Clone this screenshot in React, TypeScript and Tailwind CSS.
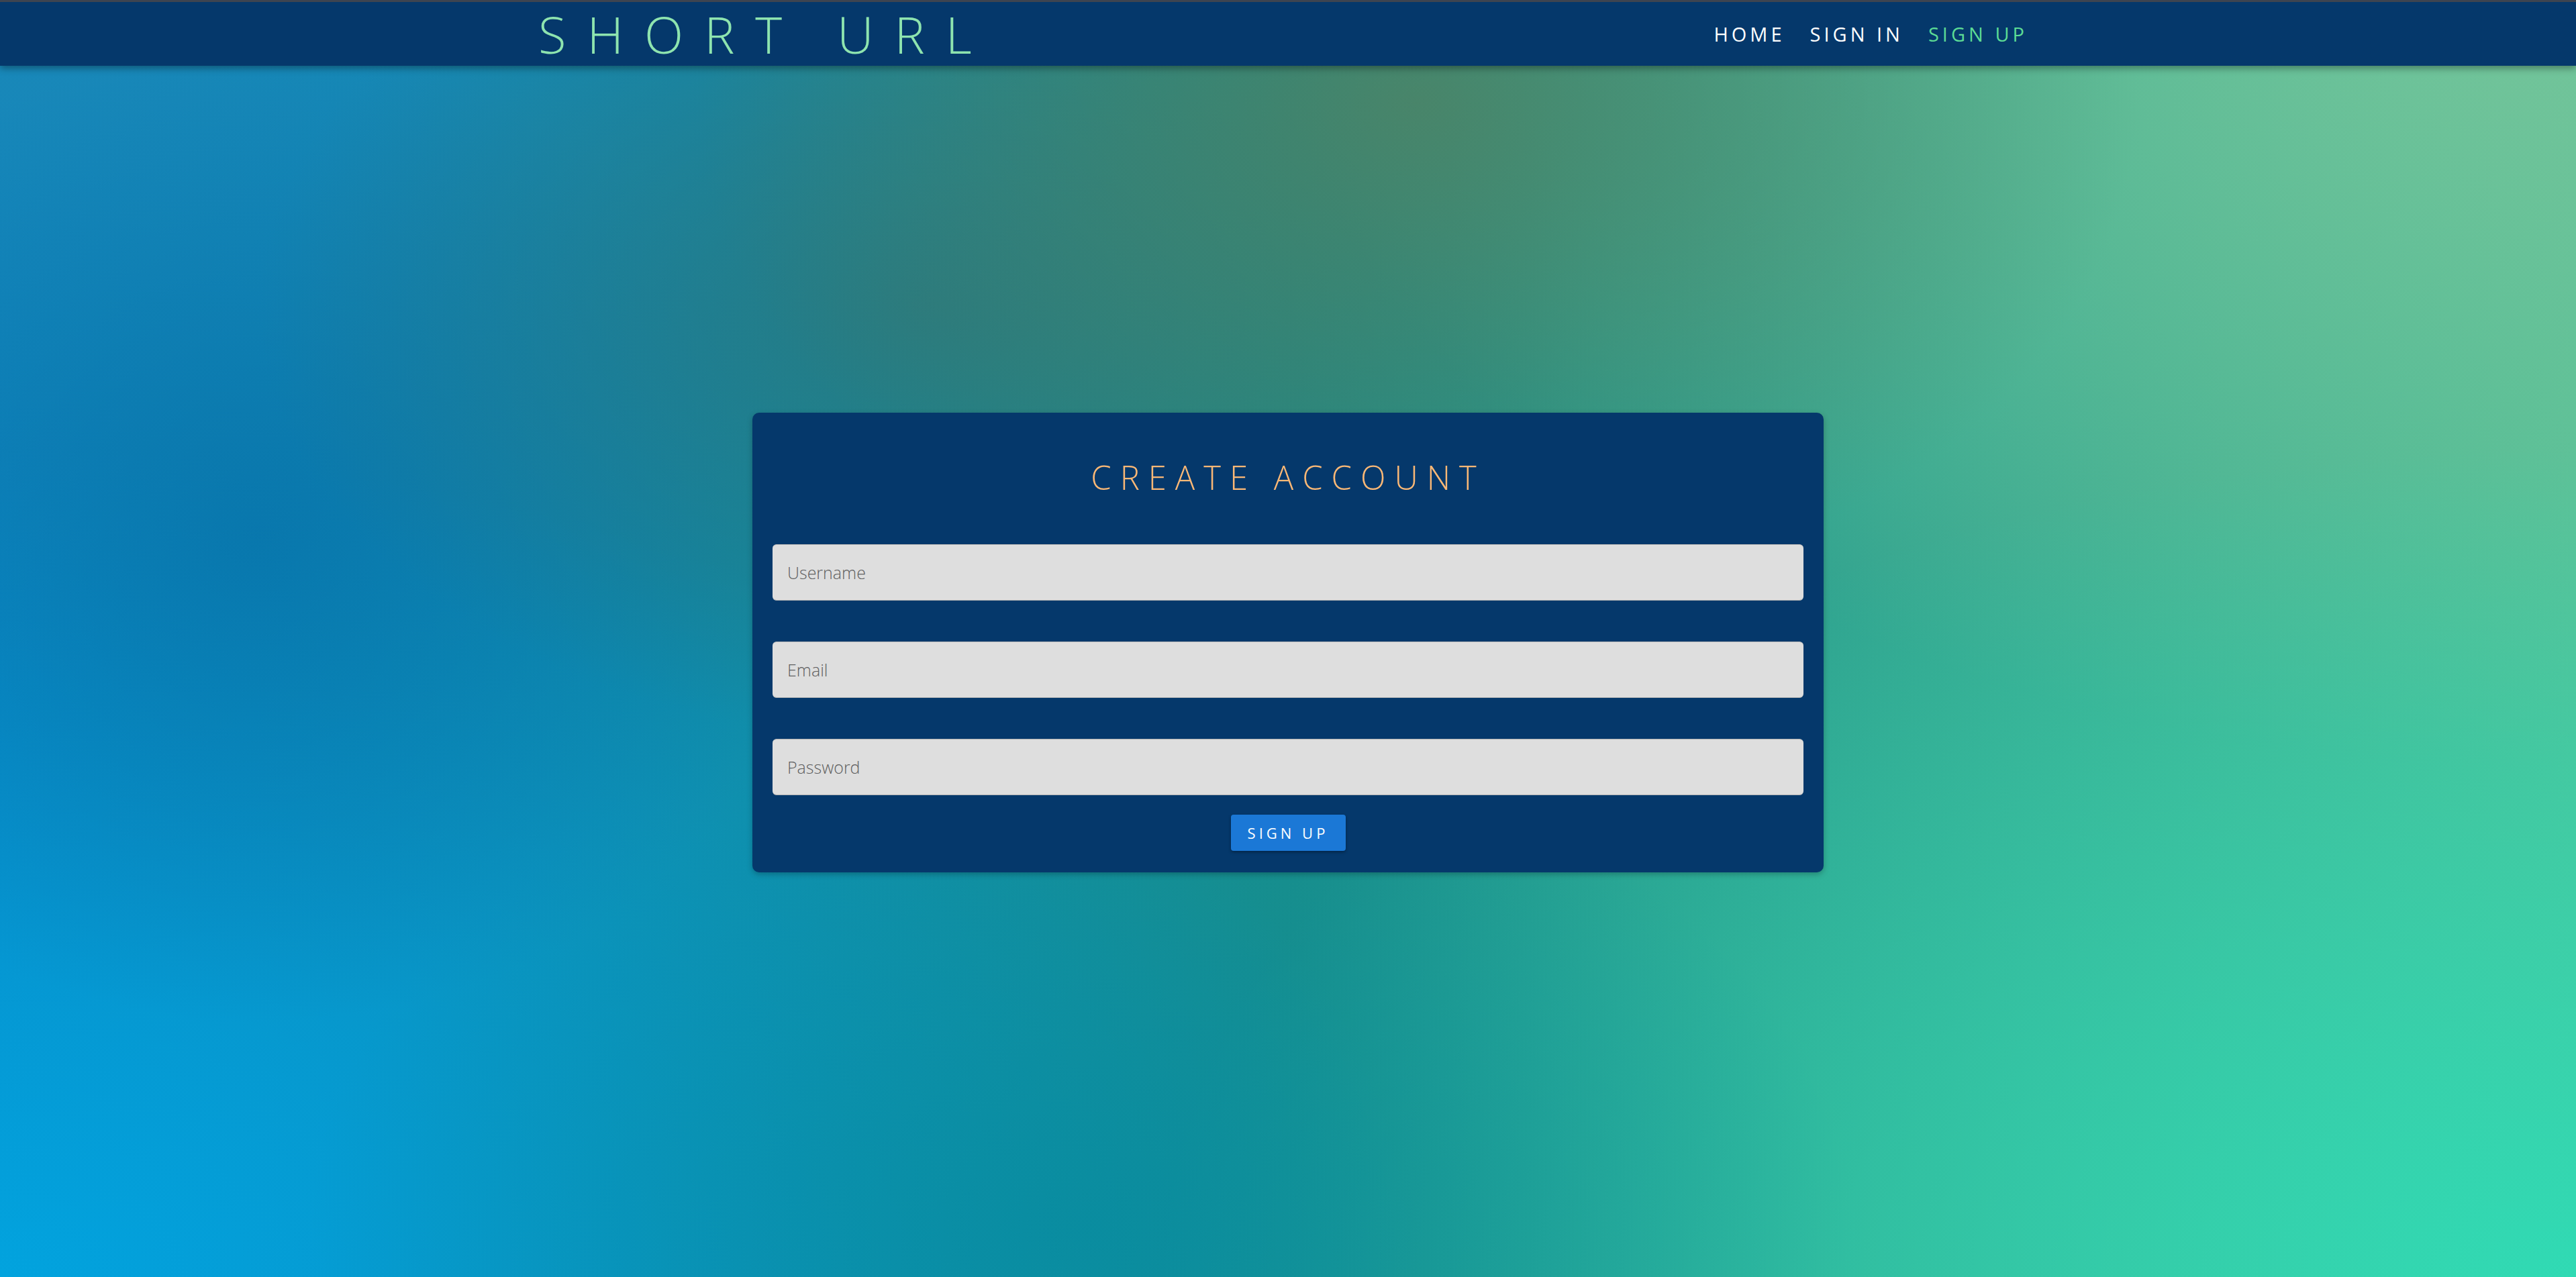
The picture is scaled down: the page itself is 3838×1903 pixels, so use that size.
import { useState } from "react";

const navLinks = [
  { label: "HOME", active: false },
  { label: "SIGN IN", active: false },
  { label: "SIGN UP", active: true },
];

const fields = [
  { name: "username", type: "text", placeholder: "Username" },
  { name: "email", type: "email", placeholder: "Email" },
  { name: "password", type: "password", placeholder: "Password" },
];

export default function App() {
  const [values, setValues] = useState<Record<string, string>>({});

  return (
    <div
      className="min-h-screen w-full font-['Open_Sans','Liberation_Sans',sans-serif] [background-image:radial-gradient(ellipse_28%_40%_at_55%_8%,rgba(78,130,100,0.85),transparent),radial-gradient(ellipse_26%_34%_at_36%_24%,rgba(44,116,120,0.75),transparent),radial-gradient(ellipse_22%_38%_at_10%_42%,rgba(6,112,168,0.7),transparent),radial-gradient(ellipse_30%_40%_at_42%_96%,rgba(6,138,158,0.7),transparent),radial-gradient(ellipse_55%_65%_at_0%_100%,#02a3de,transparent),radial-gradient(ellipse_55%_65%_at_100%_100%,#30dab4,transparent),radial-gradient(ellipse_50%_60%_at_100%_0%,#74c49a,transparent),radial-gradient(ellipse_45%_55%_at_0%_0%,#1a88b8,transparent),linear-gradient(to_right,#0a84c0,#1a8f8a_50%,#50bf96)]"
    >
      {/* Top bar */}
      <header className="relative z-10 h-[98px] border-t-[3px] border-[#3e4450] bg-[#05386b] shadow-[0_4px_10px_rgba(0,0,0,0.35)]">
        <div className="mx-auto flex h-full w-[2234px] items-center justify-between pr-[15px]">
          <span className="text-[76px] font-light leading-none tracking-[31px] text-[#8ee4af]">
            SHORT URL
          </span>
          <nav className="flex items-center gap-[37px]">
            {navLinks.map((link) => (
              <a
                key={link.label}
                href="#"
                className={`text-[29px] leading-none tracking-[5px] ${
                  link.active ? "text-[#5cdb95]" : "text-white"
                }`}
              >
                {link.label}
              </a>
            ))}
          </nav>
        </div>
      </header>

      {/* Sign up card */}
      <main className="pt-[517px]">
        <form
          className="mx-auto w-[1596px] rounded-[10px] bg-[#05386b] px-[30px] pt-[67px] pb-[32px] shadow-[0_3px_8px_rgba(0,0,0,0.25)]"
          onSubmit={(e) => e.preventDefault()}
        >
          <h1 className="text-center text-[49px] font-light leading-[58px] tracking-[13px] text-[#fbb876]">
            CREATE ACCOUNT
          </h1>

          <div className="mt-[71px] flex flex-col gap-[61px]">
            {fields.map((f) => (
              <input
                key={f.name}
                type={f.type}
                placeholder={f.placeholder}
                value={values[f.name] ?? ""}
                onChange={(e) => setValues({ ...values, [f.name]: e.target.value })}
                className="h-[84px] w-full rounded-[6px] border-y border-[#b4b4b4] bg-[#dedede] px-[22px] text-[25px] font-light text-[#333] outline-none placeholder:text-[#5f5f5f]"
              />
            ))}
          </div>

          <div className="mt-[29px] flex justify-center">
            <button
              type="submit"
              className="h-[54px] w-[171px] rounded-[4px] bg-[#1b78d6] text-[22px] tracking-[5px] text-white shadow-[0_2px_4px_rgba(0,0,0,0.35)]"
            >
              SIGN UP
            </button>
          </div>
        </form>
      </main>
    </div>
  );
}
